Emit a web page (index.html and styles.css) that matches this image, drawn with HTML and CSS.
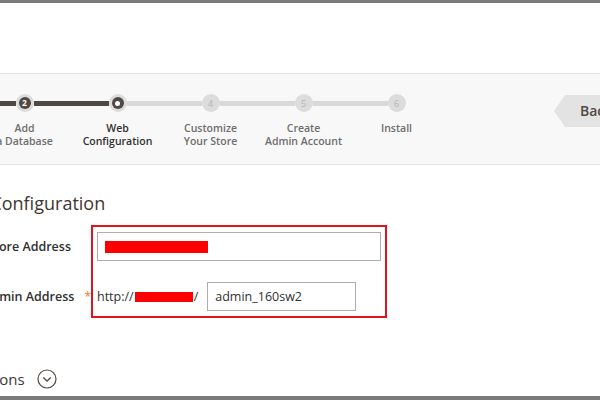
FILE: index.html
```html
<!DOCTYPE html>
<html lang="en">
<head>
<meta charset="utf-8">
<title>Web Configuration</title>
<link rel="stylesheet" href="styles.css">
</head>
<body>
<div class="frame">
  <header class="topbar"></header>
  <nav class="progress">
    <ol class="steps">
      <li class="step done first">
        <div class="track"><span class="seg"></span><span class="dot"><span class="inner">1</span></span><span class="seg dark"></span></div>
        <div class="label">Readiness<br>Check</div>
      </li>
      <li class="step done">
        <div class="track"><span class="seg dark"></span><span class="dot"><span class="inner">2</span></span><span class="seg dark"></span></div>
        <div class="label">Add<br>a Database</div>
      </li>
      <li class="step active">
        <div class="track"><span class="seg dark"></span><span class="dot"><span class="inner"><span class="pip"></span></span></span><span class="seg"></span></div>
        <div class="label">Web<br>Configuration</div>
      </li>
      <li class="step todo">
        <div class="track"><span class="seg"></span><span class="dot">4</span><span class="seg"></span></div>
        <div class="label">Customize<br>Your Store</div>
      </li>
      <li class="step todo">
        <div class="track"><span class="seg"></span><span class="dot">5</span><span class="seg"></span></div>
        <div class="label">Create<br>Admin Account</div>
      </li>
      <li class="step todo last">
        <div class="track"><span class="seg"></span><span class="dot">6</span><span class="seg none"></span></div>
        <div class="label">Install</div>
      </li>
    </ol>
    <div class="back">Back</div>
  </nav>
  <main class="content">
    <h2 class="title">Web Configuration</h2>
    <div class="form">
      <div class="labels">
        <div class="lbl"><span class="lbl-text">Your Store Address</span><span class="star"></span></div>
        <div class="lbl"><span class="lbl-text">Magento Admin Address</span><span class="star">*</span></div>
      </div>
      <div class="fields">
        <div class="input wide"><span class="redact r1"></span></div>
        <div class="admin-row">
          <span class="prefix">http://</span><span class="redact r2"></span><span class="prefix">/</span>
          <div class="input short">admin_160sw2</div>
        </div>
      </div>
    </div>
    <div class="advanced">
      <span>Advanced Options</span>
      <svg class="toggle" width="20" height="20" viewBox="0 0 20 20"><circle cx="10" cy="10" r="9" fill="none" stroke="#514943" stroke-width="1.2"/><path d="M6.3 8.6 L10 12 L13.7 8.6" fill="none" stroke="#514943" stroke-width="1.3"/></svg>
    </div>
  </main>
</div>
</body>
</html>
```
FILE: styles.css
```css
html, body {
  margin: 0;
  padding: 0;
  overflow: hidden;
  background: #ffffff;
}
.frame {
  height: 400px;
  box-sizing: border-box;
  border-top: 3px solid #7b7b7b;
  border-bottom: 4px solid #7b7b7b;
  overflow: hidden;
  font-family: "Open Sans", "Noto Sans", sans-serif;
  color: #303030;
}
.topbar {
  height: 70px;
  background: #ffffff;
}
.progress {
  display: flex;
  align-items: flex-start;
  background: #f8f8f8;
  border-top: 1px solid #e4e4e4;
  border-bottom: 1px solid #e4e4e4;
  padding: 20px 0 15px;
  height: 55px;
}
.steps {
  list-style: none;
  margin: 0 0 0 -115px;
  padding: 0;
  display: flex;
  flex-shrink: 0;
}
.step {
  width: 93px;
  flex-shrink: 0;
}
.track {
  display: flex;
  align-items: center;
  height: 18px;
}
.seg {
  flex: 1;
  height: 5px;
  background: #d9d9d9;
}
.seg.dark { background: #4f4844; }
.step.first .seg:first-child,
.seg.none { background: transparent; }
.dot {
  width: 18px;
  height: 18px;
  border-radius: 50%;
  background: #dcdcdc;
  display: flex;
  align-items: center;
  justify-content: center;
  flex-shrink: 0;
  font-size: 9px;
  color: #b5b5b5;
}
.inner {
  width: 12px;
  height: 12px;
  border-radius: 50%;
  background: #4f4844;
  color: #ffffff;
  font-size: 8.5px;
  font-weight: 700;
  display: flex;
  align-items: center;
  justify-content: center;
  line-height: 1;
}
.pip {
  width: 5px;
  height: 5px;
  border-radius: 50%;
  background: #ffffff;
}
.label {
  margin-top: 10px;
  text-align: center;
  font-size: 10.5px;
  line-height: 13px;
  font-weight: 600;
  color: #6e6e6e;
  white-space: nowrap;
}
.step.active .label { color: #303030; }
.back {
  flex-shrink: 0;
  margin: 1px 0 0 111px;
  width: 90px;
  height: 32px;
  box-sizing: border-box;
  padding-left: 26px;
  background: #e3e3e3;
  clip-path: polygon(11px 0, 100% 0, 100% 100%, 11px 100%, 0 50%);
  font-size: 14px;
  font-weight: 600;
  line-height: 32px;
  color: #514943;
}
.content {
  margin-left: -52px;
  padding-top: 26px;
}
.title {
  margin: 0;
  font-size: 18px;
  line-height: 24px;
  font-weight: 400;
  color: #41362f;
  white-space: nowrap;
}
.form {
  display: flex;
  margin-top: 10px;
}
.labels {
  width: 143px;
  flex-shrink: 0;
  padding-top: 7px;
  display: flex;
  flex-direction: column;
  gap: 21px;
}
.lbl {
  display: flex;
  justify-content: flex-end;
  line-height: 29px;
  height: 29px;
  font-size: 12.5px;
  font-weight: 600;
  color: #303030;
  white-space: nowrap;
}
.star {
  width: 20px;
  box-sizing: border-box;
  padding-left: 10px;
  color: #eb7a30;
  font-size: 12px;
  font-weight: 400;
}
.fields {
  width: 296px;
  box-sizing: border-box;
  border: 2px solid #e0141e;
  padding: 5px 4px;
  display: flex;
  flex-direction: column;
  gap: 21px;
}
.input {
  height: 29px;
  box-sizing: border-box;
  border: 1px solid #adadad;
  background: #ffffff;
  display: flex;
  align-items: center;
  padding-left: 7px;
  font-size: 12.5px;
  color: #303030;
}
.input.wide { width: 284px; }
.input.short { width: 149px; margin-left: 9px; }
.admin-row {
  display: flex;
  align-items: center;
  height: 29px;
}
.prefix {
  font-size: 12.5px;
  color: #303030;
}
.redact {
  display: block;
  background: #ff0000;
}
.r1 { width: 103px; height: 12px; }
.r2 { width: 58px; height: 10px; margin: 0 1px 0 1px; }
.advanced {
  display: flex;
  align-items: center;
  margin: 51px 0 0 -51px;
  font-size: 15px;
  line-height: 20px;
  color: #41362f;
  white-space: nowrap;
}
.toggle {
  margin-left: 12px;
  flex-shrink: 0;
}
```
